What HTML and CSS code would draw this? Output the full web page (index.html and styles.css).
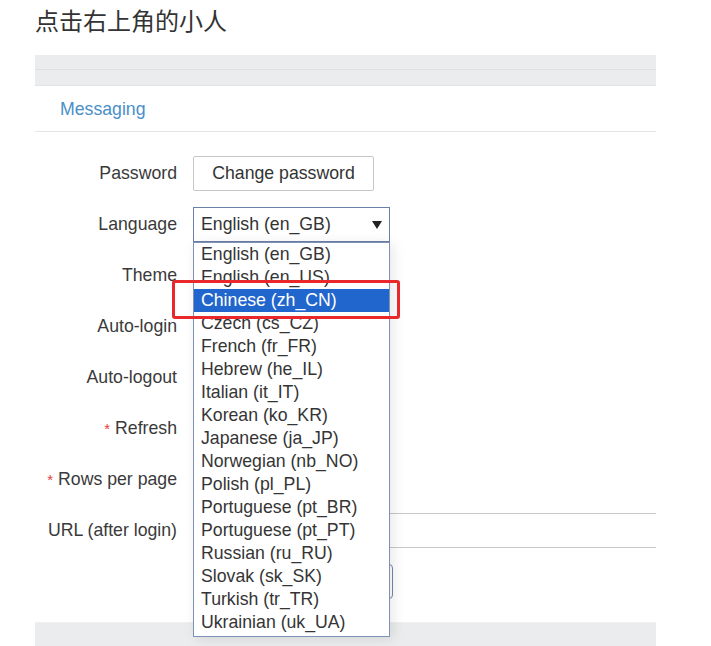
FILE: index.html
```html
<!DOCTYPE html>
<html lang="zh">
<head>
<meta charset="utf-8">
<title>Messaging</title>
<link rel="stylesheet" href="styles.css">
</head>
<body>
<h1 class="title">点击右上角的小人</h1>
<div class="panel">
  <div class="topband"><div class="topband-inner"></div></div>
  <div class="tabs"><span class="tab">Messaging</span></div>
  <div class="form">
    <div class="row">
      <div class="label">Password</div>
      <div class="ctrl"><button class="btn">Change password</button></div>
    </div>
    <div class="row row-top">
      <div class="label">Language</div>
      <div class="ctrl ctrl-rel">
        <div class="select">
          <span>English (en_GB)</span>
          <svg class="arrow" width="10" height="8" viewBox="0 0 10 8"><path d="M0 0 H10 L5 8 Z" fill="#222"/></svg>
        </div>
        <div class="dropdown">
          <ul class="options">
            <li>English (en_GB)</li>
            <li>English (en_US)</li>
            <li class="sel">Chinese (zh_CN)</li>
            <li>Czech (cs_CZ)</li>
            <li>French (fr_FR)</li>
            <li>Hebrew (he_IL)</li>
            <li>Italian (it_IT)</li>
            <li>Korean (ko_KR)</li>
            <li>Japanese (ja_JP)</li>
            <li>Norwegian (nb_NO)</li>
            <li>Polish (pl_PL)</li>
            <li>Portuguese (pt_BR)</li>
            <li>Portuguese (pt_PT)</li>
            <li>Russian (ru_RU)</li>
            <li>Slovak (sk_SK)</li>
            <li>Turkish (tr_TR)</li>
            <li>Ukrainian (uk_UA)</li>
          </ul>
          <div class="mark"></div>
        </div>
      </div>
    </div>
    <div class="row">
      <div class="label">Theme</div>
      <div class="ctrl"></div>
    </div>
    <div class="row">
      <div class="label">Auto-login</div>
      <div class="ctrl"></div>
    </div>
    <div class="row">
      <div class="label">Auto-logout</div>
      <div class="ctrl"></div>
    </div>
    <div class="row">
      <div class="label"><span class="req">*</span> Refresh</div>
      <div class="ctrl"></div>
    </div>
    <div class="row">
      <div class="label"><span class="req">*</span> Rows per page</div>
      <div class="ctrl"></div>
    </div>
    <div class="row">
      <div class="label">URL (after login)</div>
      <div class="ctrl"><div class="input"></div></div>
    </div>
    <div class="row">
      <div class="label"></div>
      <div class="ctrl"><button class="btn btn-update"></button></div>
    </div>
  </div>
  <div class="footband"></div>
</div>
</body>
</html>
```
FILE: styles.css
```css
html, body {
  margin: 0;
  padding: 0;
  background: #ffffff;
}
body {
  font-family: "Liberation Sans", Arial, sans-serif;
  color: #333333;
  height: 646px;
  overflow: hidden;
}
.title {
  margin: 0 0 15px 35px;
  font-family: "Noto Sans CJK SC", "Noto Sans", sans-serif;
  font-weight: 400;
  font-size: 24px;
  line-height: 40px;
  color: #333333;
}
.panel {
  margin-left: 35px;
  width: 621px;
  overflow: hidden;
  position: relative;
}
.topband {
  height: 31px;
  background: #ebeced;
  border-bottom: 1px solid #e2e3e5;
  box-sizing: border-box;
}
.topband-inner {
  height: 14px;
  border-bottom: 1px solid #dfe0e2;
}
.tabs {
  height: 46px;
  box-sizing: border-box;
  border-bottom: 1px solid #e4e4e4;
  padding: 2px 0 0 25px;
  display: flex;
  align-items: center;
}
.tab {
  font-size: 17.7px;
  color: #4a8fc8;
}
.form {
  padding: 16px 0 15px;
  position: relative;
}
.row {
  display: grid;
  grid-template-columns: 142px 1fr;
  column-gap: 16px;
  height: 51px;
  align-items: center;
}
.row-top {
  position: relative;
  z-index: 10;
}
.label {
  text-align: right;
  font-size: 17.7px;
  color: #3a3a3a;
  white-space: nowrap;
}
.req {
  color: #e0403c;
  font-size: 15px;
}
.ctrl {
  height: 35px;
  display: flex;
  align-items: center;
}
.ctrl-rel {
  position: relative;
}
.btn {
  font-family: "Liberation Sans", Arial, sans-serif;
  font-size: 17.7px;
  color: #333333;
  background: #ffffff;
  border: 1px solid #c7c7c7;
  border-radius: 2px;
  height: 35px;
  width: 181px;
  padding: 0;
}
.btn-update {
  width: 200px;
  border-color: #7487ad;
  border-radius: 4px;
}
.select {
  box-sizing: border-box;
  width: 197px;
  height: 35px;
  border: 1px solid #6b80a8;
  padding: 0 7px;
  display: flex;
  align-items: center;
  justify-content: space-between;
  font-size: 17.7px;
  color: #333333;
}
.input {
  width: 600px;
  height: 35px;
  box-sizing: border-box;
  border: 1px solid #c8c8c8;
}
.dropdown {
  position: absolute;
  left: 0;
  top: 35px;
  width: 197px;
}
.options {
  margin: 0;
  padding: 0 0 2px;
  list-style: none;
  box-sizing: border-box;
  border: 1px solid #7f92b6;
  background: #ffffff;
  box-shadow: 3px 2px 12px rgba(0, 0, 0, 0.10);
}
.options li {
  height: 23px;
  line-height: 23px;
  padding-left: 7px;
  font-size: 17.7px;
  color: #353535;
  white-space: nowrap;
}
.options li.sel {
  background: #2166cc;
  color: #ffffff;
}
.mark {
  position: absolute;
  left: -21px;
  top: 38px;
  width: 228px;
  height: 39px;
  box-sizing: border-box;
  border: 3px solid #e8282b;
  border-radius: 3px;
}
.footband {
  height: 30px;
  background: #ebeced;
  border-top: 1px solid #f0f0f1;
}
```
